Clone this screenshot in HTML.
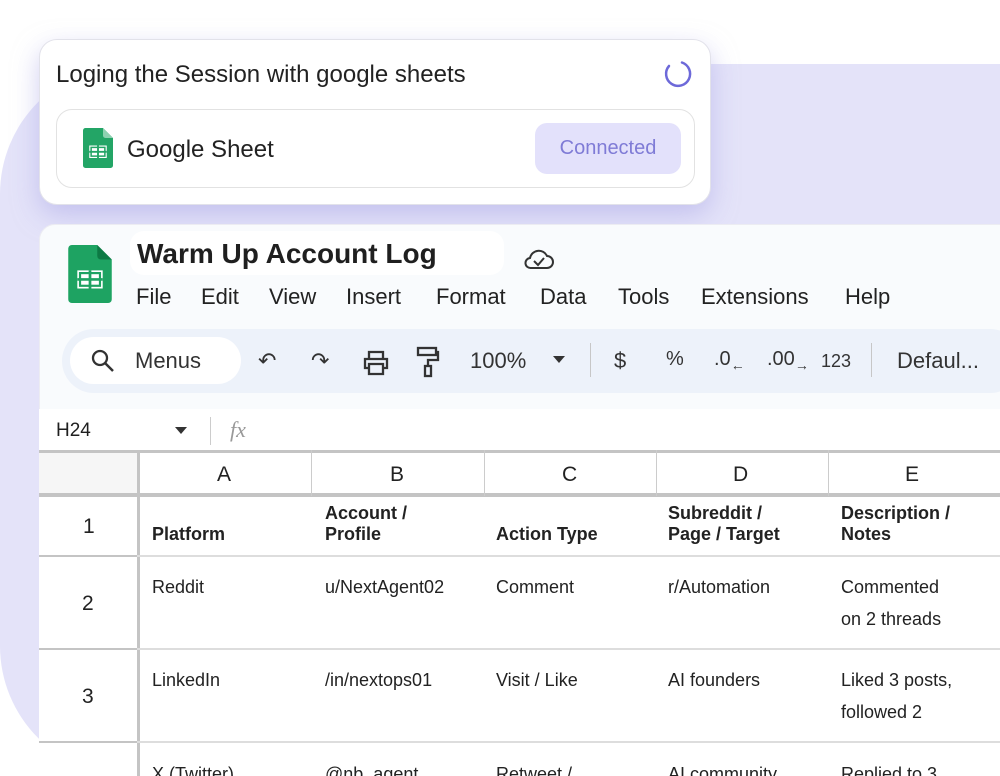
<!DOCTYPE html>
<html><head><meta charset="utf-8"><style>
*{box-sizing:border-box;margin:0;padding:0}
html{width:1000px;height:776px;overflow:hidden}
body{width:1000px;height:776px;overflow:hidden;background:#fff;font-family:"Liberation Sans",Arial,sans-serif;position:relative;color:#1f1f1f}
.bg{position:absolute;left:0;top:64px;width:1090px;height:712px;background:#e4e3f9;border-radius:130px 90px 0 130px}
.card{position:absolute;left:39px;top:39px;width:672px;height:166px;background:#fff;border:1px solid #e2e2ea;border-radius:18px;box-shadow:0 10px 26px rgba(170,165,230,.55)}
.card .t{position:absolute;left:16px;top:21px;font-size:24px;color:#222}
.inner{position:absolute;left:16px;top:69px;width:639px;height:79px;border:1.5px solid #e2e2e2;border-radius:16px}
.btn{position:absolute;right:13px;top:13px;width:146px;height:51px;background:#e3e1fb;border-radius:12px;color:#7f7bd6;font-size:20px;text-align:center;line-height:51px}
.sheet{position:absolute;left:39px;top:224px;width:1000px;height:552px;background:#f9fbfd;border-radius:16px 0 0 0;border:1px solid #ececf2}
.abs{position:absolute}
.menu span{position:absolute;top:284px;font-size:22px;color:#222}
.tb{position:absolute;left:62px;top:329px;width:960px;height:64px;background:#edf2fa;border-radius:32px}
.search{position:absolute;left:70px;top:337px;width:171px;height:47px;background:#fff;border-radius:24px}
.tbt{position:absolute;top:348px;font-size:22px;color:#333}
.grid{position:absolute;left:39px;top:450px;width:961px;height:330px;background:#fff}
.c{position:absolute;font-size:18px;color:#222}
.b{font-weight:bold}
</style></head><body>
<div class="bg"></div>
<div class="card">
 <div class="t">Loging the Session with google sheets</div>
 <svg class="abs" style="left:623px;top:19px" width="30" height="30" viewBox="0 0 30 30"><path d="M19 3.5 A12 12 0 1 1 6 7" fill="none" stroke="#6d69d9" stroke-width="2.5" stroke-linecap="round"/></svg>
 <div class="inner">
  <svg class="abs" style="left:26px;top:18px" width="30" height="40" viewBox="0 0 24 32"><path d="M0 2a2 2 0 0 1 2-2h14l8 8v22a2 2 0 0 1-2 2H2a2 2 0 0 1-2-2z" fill="#23a566"/><path d="M16 0l8 8h-6a2 2 0 0 1-2-2z" fill="#8ed1b1"/><rect x="5" y="14" width="14" height="10" fill="#fff"/><path d="M5 19h14M12 14v10" stroke="#23a566" stroke-width="1.5"/><rect x="6.5" y="15.5" width="11" height="7" fill="none" stroke="#23a566" stroke-width="1.2"/></svg>
  <div class="abs" style="left:70px;top:26px;font-size:24px;color:#222">Google Sheet</div>
  <div class="btn">Connected</div>
 </div>
</div>
<div class="sheet"></div>
<svg class="abs" style="left:68px;top:245px" width="44" height="58" viewBox="0 0 24 32"><path d="M0 2a2 2 0 0 1 2-2h14l8 8v22a2 2 0 0 1-2 2H2a2 2 0 0 1-2-2z" fill="#1ea362"/><path d="M16 0l8 8h-6a2 2 0 0 1-2-2z" fill="#0d7a44"/><rect x="5" y="14" width="14" height="10" fill="#fff"/><path d="M5 19h14M12 14v10" stroke="#1ea362" stroke-width="1.5"/><rect x="6.5" y="15.5" width="11" height="7" fill="none" stroke="#1ea362" stroke-width="1.2"/></svg>
<div class="abs" style="left:130px;top:231px;width:374px;height:44px;background:#fff;border-radius:14px"></div>
<div class="abs b" style="left:137px;top:238px;font-size:28px;color:#1f1f1f">Warm Up Account Log</div>
<svg class="abs" style="left:523px;top:246px" width="32" height="26" viewBox="0 0 32 26"><path d="M8 22h16a6 6 0 0 0 0-12 9 9 0 0 0-17 2 5 5 0 0 0 1 10z" fill="none" stroke="#333" stroke-width="2"/><path d="M11 15l4 4 6-7" fill="none" stroke="#333" stroke-width="2"/></svg>
<div class="menu"><span style="left:136px">File</span><span style="left:201px">Edit</span><span style="left:269px">View</span><span style="left:346px">Insert</span><span style="left:436px">Format</span><span style="left:540px">Data</span><span style="left:618px">Tools</span><span style="left:701px">Extensions</span><span style="left:845px">Help</span></div>
<div class="tb"></div><div class="search"></div>
<svg class="abs" style="left:90px;top:348px" width="26" height="26" viewBox="0 0 26 26"><circle cx="10" cy="10" r="7" fill="none" stroke="#333" stroke-width="2.3"/><path d="M15 15l8 8" stroke="#333" stroke-width="2.5"/></svg>
<div class="tbt" style="left:135px">Menus</div>
<div class="tbt" style="left:258px">↶</div><div class="tbt" style="left:311px">↷</div>
<svg class="abs" style="left:362px;top:350px" width="28" height="26" viewBox="0 0 28 26"><path d="M7 8V2h14v6M7 18H3V9h22v9h-4M7 14h14v10H7z" fill="none" stroke="#333" stroke-width="2.3"/></svg>
<svg class="abs" style="left:416px;top:346px" width="24" height="32" viewBox="0 0 24 32"><rect x="2" y="2" width="18" height="7" fill="none" stroke="#333" stroke-width="2.3"/><path d="M20 6h2v8H12v6" fill="none" stroke="#333" stroke-width="2.3"/><rect x="9" y="20" width="6" height="10" fill="none" stroke="#333" stroke-width="2.3"/></svg>
<div class="tbt" style="left:470px">100%</div>
<div class="abs" style="left:553px;top:356px;border-left:6px solid transparent;border-right:6px solid transparent;border-top:7px solid #333"></div>
<div class="abs" style="left:590px;top:343px;width:1px;height:34px;background:#c7c7c7"></div>
<div class="tbt" style="left:614px">$</div><div class="tbt" style="left:666px;font-size:20px">%</div>
<div class="tbt" style="left:714px;font-size:20px">.0<sub style="font-size:14px">←</sub></div>
<div class="tbt" style="left:767px;font-size:20px">.00<sub style="font-size:14px">→</sub></div>
<div class="tbt" style="left:821px;font-size:18px;top:351px">123</div>
<div class="abs" style="left:871px;top:343px;width:1px;height:34px;background:#c7c7c7"></div>
<div class="tbt" style="left:897px">Defaul...</div>
<div class="abs" style="left:39px;top:409px;width:961px;height:42px;background:#fff"></div>
<div class="abs" style="left:56px;top:420px;font-size:19px">H24</div>
<div class="abs" style="left:175px;top:427px;border-left:6px solid transparent;border-right:6px solid transparent;border-top:7px solid #333"></div>
<div class="abs" style="left:210px;top:417px;width:1px;height:28px;background:#ccc"></div>
<div class="abs" style="left:230px;top:417px;font-size:22px;font-style:italic;color:#999;font-family:'Liberation Serif',serif">fx</div>
<div class="grid"></div>
<div class="abs" style="left:39px;top:450px;width:961px;height:3px;background:#c4c4c4"></div>
<div class="abs" style="left:39px;top:453px;width:98px;height:40px;background:#f6f6f6"></div>
<div class="abs" style="left:39px;top:493px;width:961px;height:4px;background:#c4c4c4"></div>
<div class="abs" style="left:137px;top:450px;width:3px;height:330px;background:#c4c4c4"></div>
<div class="abs" style="left:311px;top:450px;width:1px;height:46px;background:#ccc"></div>
<div class="abs" style="left:484px;top:450px;width:1px;height:46px;background:#ccc"></div>
<div class="abs" style="left:656px;top:450px;width:1px;height:46px;background:#ccc"></div>
<div class="abs" style="left:828px;top:450px;width:1px;height:46px;background:#ccc"></div>
<div class="abs" style="left:39px;top:555px;width:961px;height:2px;background:#ddd"></div>
<div class="abs" style="left:39px;top:648px;width:961px;height:2px;background:#ddd"></div>
<div class="abs" style="left:39px;top:741px;width:961px;height:2px;background:#ddd"></div>
<div class="abs" style="left:39px;top:555px;width:98px;height:2px;background:#c4c4c4"></div>
<div class="abs" style="left:39px;top:648px;width:98px;height:2px;background:#c4c4c4"></div>
<div class="abs" style="left:39px;top:741px;width:98px;height:2px;background:#c4c4c4"></div>
<div class="c" style="left:217px;top:463px;font-size:21px">A</div>
<div class="c" style="left:390px;top:463px;font-size:21px">B</div>
<div class="c" style="left:562px;top:463px;font-size:21px">C</div>
<div class="c" style="left:733px;top:463px;font-size:21px">D</div>
<div class="c" style="left:905px;top:463px;font-size:21px">E</div>
<div class="c" style="left:83px;top:515px;font-size:21px">1</div>
<div class="c" style="left:82px;top:592px;font-size:21px">2</div>
<div class="c" style="left:82px;top:685px;font-size:21px">3</div>
<div class="c b" style="left:152px;top:524px">Platform</div>
<div class="c b" style="left:325px;top:503px;line-height:21px">Account /<br>Profile</div>
<div class="c b" style="left:496px;top:524px">Action Type</div>
<div class="c b" style="left:668px;top:503px;line-height:21px">Subreddit /<br>Page / Target</div>
<div class="c b" style="left:841px;top:503px;line-height:21px">Description /<br>Notes</div>
<div class="c" style="left:152px;top:577px">Reddit</div>
<div class="c" style="left:325px;top:577px">u/NextAgent02</div>
<div class="c" style="left:496px;top:577px">Comment</div>
<div class="c" style="left:668px;top:577px">r/Automation</div>
<div class="c" style="left:841px;top:577px;line-height:32px;margin-top:-6px">Commented<br>on 2 threads</div>
<div class="c" style="left:152px;top:670px">LinkedIn</div>
<div class="c" style="left:325px;top:670px">/in/nextops01</div>
<div class="c" style="left:496px;top:670px">Visit / Like</div>
<div class="c" style="left:668px;top:670px">AI founders</div>
<div class="c" style="left:841px;top:670px;line-height:32px;margin-top:-6px">Liked 3 posts,<br>followed 2</div>
<div class="c" style="left:152px;top:764px">X (Twitter)</div>
<div class="c" style="left:325px;top:764px">@nb_agent</div>
<div class="c" style="left:496px;top:764px">Retweet /</div>
<div class="c" style="left:668px;top:764px">AI community</div>
<div class="c" style="left:841px;top:764px">Replied to 3</div>
</body></html>
